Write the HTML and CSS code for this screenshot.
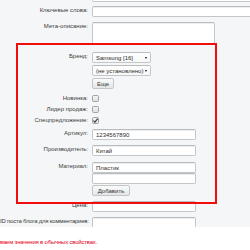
FILE: index.html
```html
<!DOCTYPE html>
<html lang="ru">
<head>
<meta charset="utf-8">
<title>Свойства товара</title>
<link rel="stylesheet" href="styles.css">
</head>
<body>
<div class="panel">
  <div class="row row-first">
    <span class="label"></span>
    <span class="field wide"></span>
  </div>
  <div class="row r-kw">
    <span class="label">Ключевые слова:</span>
    <span class="field wide"></span>
  </div>
  <div class="row r-meta">
    <span class="label">Мета-описание:</span>
    <span class="field area"></span>
  </div>
  <div class="row r-brand">
    <span class="label">Бренд:</span>
    <div class="stack">
      <span class="field select"><span>Samsung [16]</span><i class="arrow"></i></span>
      <span class="field select"><span>(не установлено)</span><i class="arrow"></i></span>
      <span class="btn b-more">Еще</span>
    </div>
  </div>
  <div class="row check r-new">
    <span class="label">Новинка:</span>
    <span class="cb"></span>
  </div>
  <div class="row check r-lead">
    <span class="label">Лидер продаж:</span>
    <span class="cb"></span>
  </div>
  <div class="row check r-spec">
    <span class="label">Спецпредложение:</span>
    <span class="cb"><svg width="7" height="7" viewBox="0 0 7 7"><polyline points="1.4,3.6 2.9,5.1 5.7,1.6" fill="none" stroke="#3b3f42" stroke-width="1.1"/></svg></span>
  </div>
  <div class="row r-art">
    <span class="label">Артикул:</span>
    <span class="field med">1234567890</span>
  </div>
  <div class="row r-man">
    <span class="label">Производитель:</span>
    <span class="field med">Китай</span>
  </div>
  <div class="row r-mat">
    <span class="label">Материал:</span>
    <div class="stack tight">
      <span class="field med">Пластик</span>
      <span class="field med"></span>
      <span class="btn b-add">Добавить</span>
    </div>
  </div>
  <div class="row r-price">
    <span class="label">Цена:</span>
    <span class="field med"></span>
  </div>
  <div class="row r-id">
    <span class="label narrow">ID поста блога для комментариев:</span>
    <span class="field med"></span>
  </div>
</div>
<p class="note">ваем значения в обычных свойствах.</p>
<div class="highlight"></div>
</body>
</html>
```
FILE: styles.css
```css
html, body {
  margin: 0;
  padding: 0;
  background: #ffffff;
}
body {
  position: relative;
  width: 250px;
  height: 250px;
  overflow: hidden;
  font-family: "Liberation Sans", Arial, sans-serif;
  font-size: 6px;
  color: #3a3a3a;
}
.panel {
  background: #f4f6f7;
  height: 227px;
  overflow: hidden;
}
.row {
  display: grid;
  grid-template-columns: 88px auto;
  column-gap: 4px;
  align-items: start;
}
.label {
  text-align: right;
  line-height: 7px;
  padding-top: 1px;
  color: #3c3c3c;
  white-space: nowrap;
}
.label.narrow { letter-spacing: -0.22px; }
.row-first { margin-top: -9px; }
.r-kw { margin-top: 4px; }
.r-meta { margin-top: 5px; }
.r-brand { margin-top: 7px; }
.r-new { margin-top: 6px; }
.r-lead { margin-top: 4px; }
.r-spec { margin-top: 4px; }
.r-art { margin-top: 5px; }
.r-man { margin-top: 5px; }
.r-mat { margin-top: 6px; }
.r-price { margin-top: 5px; }
.r-id { margin-top: 5px; }

.check { align-items: center; height: 7px; }
.check .label { padding-top: 0; }

.stack {
  display: flex;
  flex-direction: column;
  align-items: flex-start;
  gap: 2px;
}
.stack.tight { gap: 0; }

.field {
  box-sizing: border-box;
  display: flex;
  align-items: center;
  height: 11px;
  padding: 0 3px;
  background: #ffffff;
  border: 1px solid #c4c7c9;
  border-top-color: #b9bcbe;
  border-radius: 2px;
  box-shadow: inset 0 1px 0 #eceeef;
  color: #2e2e2e;
  white-space: nowrap;
}
.wide { width: 170px; }
.area { width: 123px; height: 23px; }
.med { width: 104px; }
.select {
  width: 59px;
  justify-content: space-between;
  padding-right: 3px;
  box-shadow: none;
  background: linear-gradient(#ffffff, #f6f7f7);
}
.arrow {
  width: 0;
  height: 0;
  border-left: 1.5px solid transparent;
  border-right: 1.5px solid transparent;
  border-top: 2px solid #111;
}
.btn {
  box-sizing: border-box;
  display: flex;
  align-items: center;
  justify-content: center;
  height: 11px;
  background: linear-gradient(#fbfbfb, #e3e6e7);
  border: 1px solid #c3c6c8;
  border-radius: 2px;
  color: #333;
}
.b-more { width: 22px; }
.b-add { width: 38px; height: 11px; margin-top: 1px; }

.cb {
  box-sizing: border-box;
  width: 7px;
  height: 7px;
  border: 1px solid #9ea3a6;
  border-radius: 1.5px;
  background: linear-gradient(#f2f3f4, #dfe2e4);
  display: flex;
  align-items: center;
  justify-content: center;
}
.cb svg { display: block; flex: none; }

.note {
  margin: 11px 0 0 0;
  line-height: 8px;
  letter-spacing: -0.2px;
  color: #e3001b;
  white-space: nowrap;
}

.highlight {
  position: absolute;
  left: 16px;
  top: 43px;
  width: 201px;
  height: 161px;
  box-sizing: border-box;
  border: 2px solid #f20d0d;
  pointer-events: none;
}
```
